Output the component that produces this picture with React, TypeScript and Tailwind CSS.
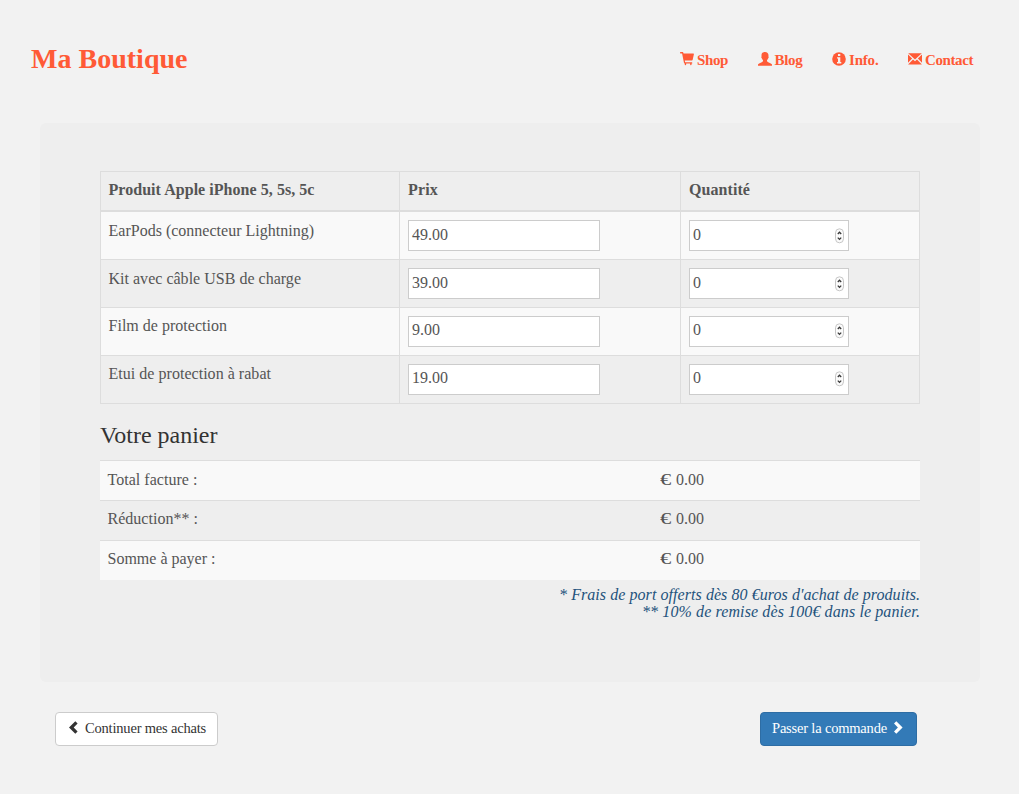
import React from "react";

const products = [
  { name: "EarPods (connecteur Lightning)", price: "49.00", width: 205.5, lift: "pt-[8px]", inputLeading: "leading-[27px]", stepper: "pt-[7px]" },
  { name: "Kit avec câble USB de charge", price: "39.00", width: 192.5, lift: "pt-[8px]", inputLeading: "leading-[27px]", stepper: "pt-[7px]" },
  { name: "Film de protection", price: "9.00", width: 118.5, lift: "pt-[7px]", inputLeading: "leading-[25px]", stepper: "pt-[6px]" },
  { name: "Etui de protection à rabat", price: "19.00", width: 162.5, lift: "pt-[7px]", inputLeading: "leading-[25px]", stepper: "pt-[6px]" },
];

const totals = [
  { label: "Total facture :", width: 90, lift: "pt-[8px]" },
  { label: "Réduction** :", width: 90.5, lift: "pt-[7px]" },
  { label: "Somme à payer :", width: 108, lift: "pt-[7px]" },
];

function CartIcon() {
  return (
    <svg width="14" height="14" viewBox="0 0 14 14" fill="currentColor">
      <path d="M.4.1h2.200c.3 0 .5.1.6.4L3.600 1.600H13.400c.4 0 .6.3.5.7L12.600 8c-.1.3-.3.5-.6.5H4.800l.3 1.800h6.800c.5 0 .5 1.200 0 1.200h-.3v.8c0 1.200-1.500 1.200-1.500 0v-.8H6.200v.8c0 1.200-1.500 1.200-1.500 0v-.9c-.4 0-.6-.2-.7-.5L2.100 1.400H.4C-.1 1.400-.1.1.4.1Z" />
    </svg>
  );
}

function UserIcon() {
  return (
    <svg width="14" height="14" viewBox="0 0 14 14" fill="currentColor">
      <path d="M7 0c2.200 0 3.500 1.300 3.500 3.400 0 .5-.1.8-.1 1 .5.3.4 1.400-.2 1.900-.2.8-.7 1.400-1.200 1.900v1.100c.2.5.8.7 1.700 1.100 1.600.7 2.900 1 3.300 2.100v1.300H0v-1.300c.4-1.100 1.700-1.400 3.300-2.100.9-.4 1.500-.6 1.700-1.100V8.200c-.5-.5-1-1.100-1.200-1.900-.6-.5-.7-1.600-.2-1.900 0-.2-.1-.5-.1-1C3.500 1.300 4.800 0 7 0Z" />
    </svg>
  );
}

function InfoIcon() {
  return (
    <svg width="14" height="14" viewBox="0 0 14 14">
      <circle cx="7" cy="7" r="6.8" fill="currentColor" />
      <path d="M6 2h2.300v2H6zM5 5.200h3.300V10h1v1.400H5V10h1V6.600H5z" fill="#f2f2f2" />
    </svg>
  );
}

function MailIcon() {
  return (
    <svg width="14" height="14" viewBox="0 0 14 14" fill="currentColor">
      <path d="M.2 1.200h13.600L7 7.500ZM0 2.500l4.100 4L0 10.700ZM14 2.500l-4.100 4 4.100 4.200ZM5 7.400l2 1.800 2-1.800 4.900 5.100H.1Z" />
    </svg>
  );
}

function Chevron({ left }: { left?: boolean }) {
  return (
    <svg width="14" height="14" viewBox="0 0 14 14" fill="currentColor">
      {left ? (
        <path d="m8.300.2 2.300 2.300L6.700 6.500l3.900 4-2.300 2.300L2 6.500Z" />
      ) : (
        <path d="M5.300.2 3 2.500l3.900 4-3.900 4 2.300 2.300 6.300-6.300Z" />
      )}
    </svg>
  );
}

function Stepper() {
  return (
    <svg width="10" height="16" viewBox="0 0 10 16" fill="none">
      <rect x=".5" y=".8" width="8" height="14" rx="4" fill="#fbfbfb" stroke="#c6c6c6" />
      <path d="M2.800 6 4.500 4.200 6.200 6M2.800 9.600l1.700 1.800 1.700-1.800" stroke="#383838" strokeWidth="1.300" />
    </svg>
  );
}

/* Text that is stretched or tightened to a fixed advance width. */
function Fit({ text, width, className = "" }: { text: string; width: number; className?: string }) {
  const ref = React.useRef<HTMLSpanElement>(null);
  const [spacing, setSpacing] = React.useState(0);
  React.useLayoutEffect(() => {
    if (ref.current) {
      const natural = ref.current.getBoundingClientRect().width;
      setSpacing((width - natural) / text.length);
    }
  }, [text, width]);
  return (
    <span ref={ref} className={"inline-block whitespace-pre " + className} style={{ letterSpacing: spacing }}>
      {text}
    </span>
  );
}

const nav = [
  { label: "Shop", icon: <CartIcon />, width: 31 },
  { label: "Blog", icon: <UserIcon />, width: 28 },
  { label: "Info.", icon: <InfoIcon />, width: 29.5 },
  { label: "Contact", icon: <MailIcon />, width: 48 },
];

export default function App() {
  return (
    <div className="h-[794px] w-[1019px] overflow-hidden bg-[#f2f2f2] font-['Liberation_Serif','Times_New_Roman',serif] text-[16px] text-[#555]">
      <header className="flex h-[123px] items-start justify-between pl-[31px] pr-[46px] font-bold text-[#ff5a36]">
        <h1 className="pt-[42px] text-[28px] leading-[34px]">
          <Fit text="Ma Boutique" width={156.5} />
        </h1>
        <nav className="flex gap-[29.5px] pt-[50px] text-[15px] leading-5">
          {nav.map((item) => (
            <a key={item.label} className="flex gap-[3px]">
              <span className="pt-[2px]">{item.icon}</span>
              <Fit text={item.label} width={item.width} />
            </a>
          ))}
        </nav>
      </header>

      <main className="ml-10 h-[559px] w-[940px] rounded-md bg-[#eee] px-[60px] pt-12">
        <div className="w-[820px] border-x border-t border-[#ddd]">
          <div className="flex h-10 border-b-2 border-[#ddd] font-bold leading-[22px]">
            <div className="w-[299px] border-r border-[#ddd] pl-[7.5px] pt-[7px]">
              <Fit text="Produit Apple iPhone 5, 5s, 5c" width={206} />
            </div>
            <div className="w-[281px] border-r border-[#ddd] pl-[8px] pt-[7px]">
              <Fit text="Prix" width={30} />
            </div>
            <div className="pl-[8px] pt-[7px]">
              <Fit text="Quantité" width={61} />
            </div>
          </div>
          {products.map((p) => (
            <div key={p.name} className="flex h-12 border-b border-[#ddd] odd:bg-[#eee] even:bg-[#f9f9f9]">
              <div className={"w-[299px] border-r border-[#ddd] pl-[7.5px] leading-[22px] " + p.lift}>
                <Fit text={p.name} width={p.width} />
              </div>
              <div className="w-[281px] border-r border-[#ddd] pl-2 pt-2">
                <div className={"h-[31px] w-[192px] border border-[#ccc] bg-white pl-[3px] " + p.inputLeading}>
                  {p.price}
                </div>
              </div>
              <div className="pl-2 pt-2">
                <div
                  className={
                    "flex h-[31px] w-[160px] justify-between border border-[#ccc] bg-white px-[3px] " + p.inputLeading
                  }
                >
                  <span>0</span>
                  <span className={p.stepper}>
                    <Stepper />
                  </span>
                </div>
              </div>
            </div>
          ))}
        </div>

        <h2 className="h-[56px] pt-[18px] text-[24px] leading-[26px] text-[#333]">
          <Fit text="Votre panier" width={117.5} />
        </h2>

        <div className="w-[820px]">
          {totals.map((t) => (
            <div
              key={t.label}
              className={"flex h-10 border-t border-[#ddd] pl-[7.5px] leading-[22px] odd:bg-[#f9f9f9] " + t.lift}
            >
              <div className="w-[552.5px]">
                <Fit text={t.label} width={t.width} />
              </div>
              <span className="w-4">
                <span className="inline-block origin-left scale-x-[1.4]">€</span>
              </span>
              <span>0.00</span>
            </div>
          ))}
        </div>

        <div className="flex flex-col items-end pt-[6px] text-[16px] italic leading-[17px] text-[#23527c]">
          <Fit text="* Frais de port offerts dès 80 €uros d'achat de produits." width={361} />
          <Fit text="** 10% de remise dès 100€ dans le panier." width={278} />
        </div>
      </main>

      <footer className="flex items-start justify-between pl-[55px] pr-[102px] pt-[30px] text-[14.5px]">
        <button className="flex h-[34px] w-[163px] gap-[4px] rounded border border-[#ccc] bg-white pl-[11px] pt-[5px] leading-5 text-[#333]">
          <span className="pt-[3px]">
            <Chevron left />
          </span>
          <Fit text="Continuer mes achats" width={121} />
        </button>
        <button className="flex h-[34px] w-[157px] gap-[4px] rounded border border-[#2e6da4] bg-[#337ab7] pl-[11px] pt-[5px] leading-5 text-white">
          <Fit text="Passer la commande" width={115} />
          <span className="pt-[3px]">
            <Chevron />
          </span>
        </button>
      </footer>
    </div>
  );
}
